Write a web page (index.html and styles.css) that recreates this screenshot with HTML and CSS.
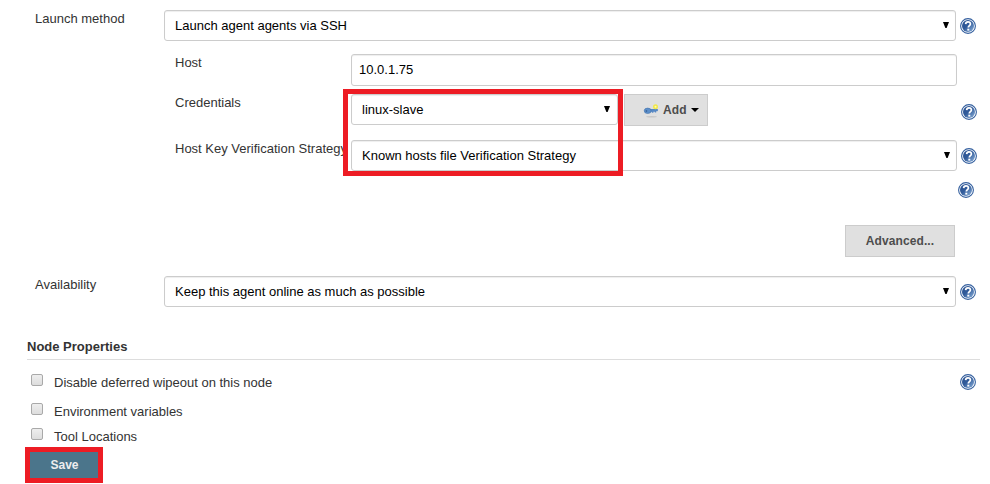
FILE: index.html
```html
<!DOCTYPE html>
<html lang="en">
<head>
<meta charset="utf-8">
<title>Node configuration</title>
<link rel="stylesheet" href="styles.css">
</head>
<body>
<svg class="defs" width="0" height="0" aria-hidden="true">
  <defs>
    <linearGradient id="blue" x1="0" y1="0" x2="1" y2="1">
      <stop offset="0" stop-color="#2b5291"/><stop offset=".45" stop-color="#305a9a"/><stop offset="1" stop-color="#8fb4dc"/>
    </linearGradient>
    <symbol id="help" viewBox="0 0 16 16">
      <circle cx="8" cy="8" r="7.4" fill="#fff" stroke="#35609f" stroke-width="1.1"/>
      <circle cx="8" cy="8" r="6" fill="url(#blue)"/>
      <path d="M5.6 6.1C5.7 4.5 6.7 3.8 8 3.8s2.4.8 2.4 2.1c0 1.7-2.1 1.8-2.1 3.7" fill="none" stroke="#fff" stroke-width="1.7"/>
      <rect x="7.3" y="10.7" width="2" height="1.9" fill="#fff"/>
    </symbol>
  </defs>
</svg>
<form class="form">
  <div class="row row-launch">
    <label class="label">Launch method</label>
    <div class="field select">Launch agent agents via SSH<svg class="arrow" viewBox="0 0 6 7"><path d="M0 0h6L3.6 6H2.4z"/></svg></div>
    <svg class="help"><use href="#help"/></svg>
  </div>
  <div class="row nested row-host">
    <label class="label">Host</label>
    <div class="field input">10.0.1.75</div>
  </div>
  <div class="row nested row-cred">
    <label class="label">Credentials</label>
    <div class="cred">
      <div class="field select">linux-slave<svg class="arrow" viewBox="0 0 6 7"><path d="M0 0h6L3.6 6H2.4z"/></svg></div>
      <div class="button add">
        <svg class="key" viewBox="0 0 16 16">
          <ellipse cx="8.5" cy="14.8" rx="5.5" ry=".8" fill="#c6c6c6"/>
          <path d="M6 7.1h8.6l.5 1.2-.6 1h-1.3v1.2h-1.4V9.7h-1.4v1H9l-.5-1H6z" fill="#5688c5"/>
          <ellipse cx="4.7" cy="8.8" rx="3.5" ry="2.7" fill="#5c8fca" stroke="#4172ad" stroke-width=".6"/>
          <ellipse cx="3.4" cy="9" rx=".9" ry=".8" fill="#2f598d"/>
          <circle cx="12.5" cy="4.7" r="2.5" fill="#f1e749"/><circle cx="12.5" cy="4.7" r="1" fill="#fffbb0"/>
        </svg>
        <span>Add</span>
        <svg class="caret" viewBox="0 0 8 4"><path d="M0 0h8L4 4z"/></svg>
      </div>
    </div>
    <svg class="help"><use href="#help"/></svg>
  </div>
  <div class="row nested row-key">
    <label class="label">Host Key Verification Strategy</label>
    <div class="field select">Known hosts file Verification Strategy<svg class="arrow" viewBox="0 0 6 7"><path d="M0 0h6L3.6 6H2.4z"/></svg></div>
    <svg class="help"><use href="#help"/></svg>
  </div>
  <div class="row-help"><svg class="help"><use href="#help"/></svg></div>
  <div class="row-advanced"><div class="button advanced">Advanced...</div></div>
  <div class="row row-avail">
    <label class="label">Availability</label>
    <div class="field select">Keep this agent online as much as possible<svg class="arrow" viewBox="0 0 6 7"><path d="M0 0h6L3.6 6H2.4z"/></svg></div>
    <svg class="help"><use href="#help"/></svg>
  </div>
  <h2 class="heading">Node Properties</h2>
  <div class="check check-wipeout"><span class="box"></span><span class="text">Disable deferred wipeout on this node</span><svg class="help"><use href="#help"/></svg></div>
  <div class="check"><span class="box"></span><span class="text">Environment variables</span></div>
  <div class="check"><span class="box"></span><span class="text">Tool Locations</span></div>
  <div class="save">Save</div>
  <div class="highlight"></div>
</form>
</body>
</html>
```
FILE: styles.css
```css
* { box-sizing: border-box; }
body {
  margin: 0;
  background: #fff;
  color: #333;
  font: 13px/15px "Liberation Sans", Arial, sans-serif;
}
svg { display: block; flex: none; }
.defs { position: absolute; }
.form {
  position: relative;
  width: 990px;
  height: 484px;
  padding-top: 10px;
  overflow: hidden;
}
.row {
  display: grid;
  grid-template-columns: 129px 792px 16px;
  padding-left: 35px;
  align-items: start;
}
.row .help { margin: 8px 0 0 4px; }
.nested {
  grid-template-columns: 176px 606px 16px;
  padding-left: 175px;
}
.label { padding-top: 1px; white-space: nowrap; }
.row-launch { height: 44px; }
.row-host { height: 40px; }
.row-cred { height: 46px; }
.row-key { height: 42px; }
.row-avail { height: 63px; }
.row-cred .help { margin-top: 10px; }
.field {
  display: flex;
  align-items: center;
  justify-content: space-between;
  height: 31px;
  padding: 0 6px 0 10px;
  border: 1px solid #ccc;
  border-radius: 3px;
  background: #fff;
  box-shadow: inset 0 1px 1px rgba(0, 0, 0, .07);
  color: #000;
}
.input { height: 32px; padding: 0 7px 1px; }
.arrow { width: 6px; height: 7px; }
.help { width: 16px; height: 16px; }
.cred { display: flex; gap: 6px; }
.cred .field { width: 267px; padding-right: 7px; }
.button {
  display: flex;
  align-items: center;
  justify-content: center;
  height: 32px;
  border: 1px solid #ccc;
  background: #e0e0e0;
  color: #4d4d4d;
  font-size: 12px;
  font-weight: bold;
  letter-spacing: .1px;
}
.add { width: 84px; justify-content: flex-start; padding-left: 18px; }
.key { width: 16px; height: 16px; margin-right: 4px; }
.caret { width: 8px; height: 4px; margin-left: 4px; fill: #000; }
.row-help { display: flex; height: 43px; padding-left: 958px; }
.row-advanced { height: 51px; padding-left: 845px; }
.advanced { width: 110px; }
.heading {
  height: 21px;
  margin: 0 10px 14px 27px;
  border-bottom: 1px solid #ddd;
  font-size: 13px;
  line-height: 15px;
}
.check { display: flex; height: 25px; padding-left: 31px; }
.check-wipeout { height: 29px; }
.box {
  width: 12px;
  height: 12px;
  margin-right: 11px;
  border: 1px solid #a9a9a9;
  border-radius: 2px;
  background: linear-gradient(#eee, #ddd);
}
.text { padding-top: 1px; }
.check .help { margin-left: auto; margin-right: 14px; }
.save {
  display: flex;
  align-items: center;
  justify-content: center;
  width: 78px;
  height: 36px;
  margin: -6px 0 0 25px;
  padding: 1px 0 0 1px;
  border: 5px solid #ed1c24;
  background: #4b758b;
  color: #eee;
  font-size: 12px;
  font-weight: bold;
}
.highlight {
  position: absolute;
  left: 343px;
  top: 89px;
  width: 280px;
  height: 87px;
  border: 5px solid #ed1c24;
}
```
